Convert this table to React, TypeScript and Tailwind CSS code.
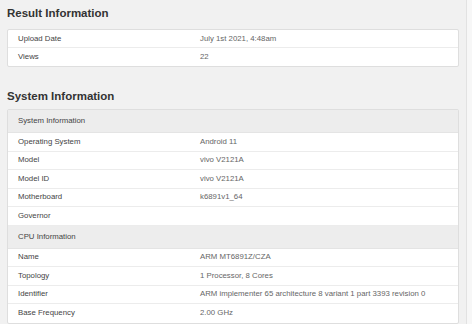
import React from "react";

type Row = { label: string; value?: string; header?: boolean };

const result: Row[] = [
  { label: "Upload Date", value: "July 1st 2021, 4:48am" },
  { label: "Views", value: "22" },
];

const system: Row[] = [
  { label: "System Information", header: true },
  { label: "Operating System", value: "Android 11" },
  { label: "Model", value: "vivo V2121A" },
  { label: "Model ID", value: "vivo V2121A" },
  { label: "Motherboard", value: "k6891v1_64" },
  { label: "Governor", value: "" },
  { label: "CPU Information", header: true },
  { label: "Name", value: "ARM MT6891Z/CZA" },
  { label: "Topology", value: "1 Processor, 8 Cores" },
  { label: "Identifier", value: "ARM implementer 65 architecture 8 variant 1 part 3393 revision 0" },
  { label: "Base Frequency", value: "2.00 GHz" },
];

function Table({ rows, h }: { rows: Row[]; h: string }) {
  return (
    <div className="bg-white border border-[#dedede] rounded-[2px] flex flex-col">
      {rows.map((r, i) =>
        r.header ? (
          <div
            key={i}
            className="h-[23px] bg-[#ededed] border-b border-[#e4e4e4] flex items-center pl-[10px] text-[#444]"
          >
            {r.label}
          </div>
        ) : (
          <div
            key={i}
            className={`${h} flex items-center border-b border-[#ececec] last:border-b-0`}
          >
            <div className="w-[192px] pl-[10px] text-[#444]">{r.label}</div>
            <div className="text-[#666]">{r.value}</div>
          </div>
        )
      )}
    </div>
  );
}

export default function App() {
  return (
    <div
      className="w-[472px] h-[324px] overflow-hidden bg-[#f1f1f1] flex"
      style={{ fontFamily: '"Liberation Sans", Arial, sans-serif' }}
    >
      <div className="flex-1 pl-[7px] pr-[7px] flex flex-col text-[7.8px] leading-none">
        <h2 className="mt-[7px] text-[11.5px] font-bold text-[#333] leading-[13px]">Result Information</h2>
        <div className="mt-[9px]">
          <Table rows={result} h="h-[18px]" />
        </div>
        <h2 className="mt-[23px] text-[11.5px] font-bold text-[#333] leading-[13px]">System Information</h2>
        <div className="mt-[6px]">
          <Table rows={system} h="h-[18.5px]" />
        </div>
      </div>
      <div className="w-[6px] bg-[#f7f7f7] border-l border-[#e2e2e2]" />
    </div>
  );
}
